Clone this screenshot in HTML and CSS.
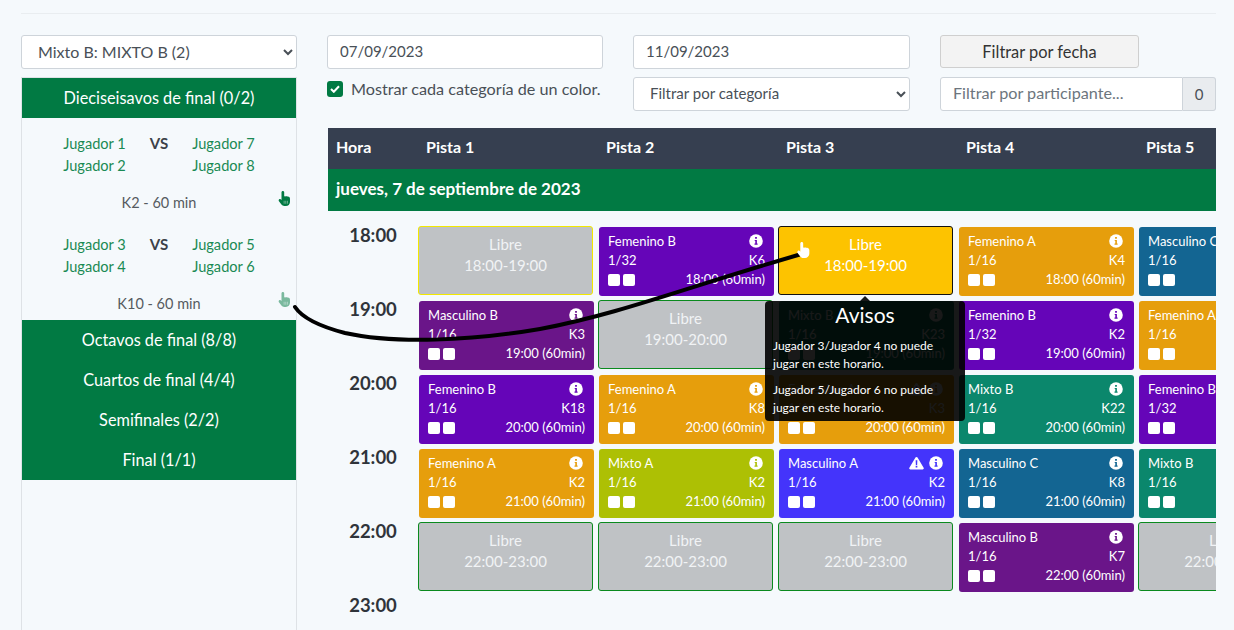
FILE: index.html
```html
<!DOCTYPE html>
<html lang="es">
  <head>
    <meta charset="UTF-8" />
    <title>Horarios</title>
    <link rel="stylesheet" href="styles.css">
  </head>
  <body>
    <svg width="0" height="0" class="defs">
      <symbol id="hand" viewBox="0 0 16 20">
        <path d="M4 1.800C4 .8 4.800 0 5.800 0s1.800.8 1.800 1.800v5.400c.7-.4 1.500-.4 2.100 0 .7-.4 1.600-.3 2.200.2.900-.3 1.900 0 2.500.6.6.6.9 1.400.9 2.300v4.200c0 3-2.400 5.500-5.400 5.500H7.700c-1.500 0-2.900-.7-3.800-1.900L.6 13.600c-.6-.8-.5-1.900.3-2.500.8-.6 1.900-.5 2.500.3l.6.8z" fill="currentColor"/>
        <path d="M7.500 13v4M9.700 13v4M11.900 13v4" stroke="#fff" stroke-opacity=".6" stroke-width=".9"/>
      </symbol>
      <symbol id="info" viewBox="0 0 14 14">
        <circle cx="7" cy="7" r="6.800" fill="#fff"/>
        <path d="M6.100 3h1.800v1.700H6.100zM5.700 5.900h2.200v3.700h.7v1.100H5.500V9.600h.8V7h-.6z" fill="currentColor"/>
      </symbol>
      <symbol id="warn" viewBox="0 0 16 14">
        <path d="M8 .5c.5 0 .9.3 1.100.7l6.500 10.800c.5.800-.1 1.800-1 1.800H1.400c-.9 0-1.500-1-1-1.800L6.900 1.200C7.100.8 7.500.5 8 .5z" fill="#fff"/>
        <path d="M7.100 4h1.800l-.2 5H7.300zM7.100 10h1.800v1.700H7.100z" fill="#4434fb"/>
      </symbol>
    </svg>

    <div class="page">
      <hr class="top-rule" />
      <div class="layout">
        <!-- Left: draw -->
        <aside class="sidebar">
          <select class="field select side-select">
            <option>Mixto B: MIXTO B (2)</option>
          </select>
          <div class="draw">
            <div class="round">Dieciseisavos de final (0/2)</div>
            <div class="match">
              <div class="players">
                <div>Jugador 1<br />Jugador 2</div>
                <strong>VS</strong>
                <div>Jugador 7<br />Jugador 8</div>
              </div>
              <div class="match-meta">K2 - 60 min</div>
              <svg class="drag"><use href="#hand" /></svg>
            </div>
            <div class="match">
              <div class="players">
                <div>Jugador 3<br />Jugador 4</div>
                <strong>VS</strong>
                <div>Jugador 5<br />Jugador 6</div>
              </div>
              <div class="match-meta">K10 - 60 min</div>
              <svg class="drag faded"><use href="#hand" /></svg>
            </div>
            <div class="round">Octavos de final (8/8)</div>
            <div class="round">Cuartos de final (4/4)</div>
            <div class="round">Semifinales (2/2)</div>
            <div class="round">Final (1/1)</div>
          </div>
        </aside>

        <!-- Right: calendar -->
        <main class="content">
          <div class="filters">
            <input class="field" type="text" value="07/09/2023" />
            <input class="field" type="text" value="11/09/2023" />
            <button class="filter-btn">Filtrar por fecha</button>
            <label class="color-check">
              <span class="check">
                <svg width="10" height="8" viewBox="0 0 10 8"><path d="M1 4l2.800 2.800L9 1.300" fill="none" stroke="#fff" stroke-width="2"/></svg>
              </span>
              Mostrar cada categoría de un color.
            </label>
            <select class="field select">
              <option>Filtrar por categoría</option>
            </select>
            <div class="search">
              <input class="field" type="text" placeholder="Filtrar por participante..." />
              <span class="count">0</span>
            </div>
          </div>

          <div class="schedule">
            <div class="courts">
              <div>Hora</div>
              <div>Pista 1</div>
              <div>Pista 2</div>
              <div>Pista 3</div>
              <div>Pista 4</div>
              <div>Pista 5</div>
            </div>
            <div class="day">jueves, 7 de septiembre de 2023</div>
            <div class="grid" id="grid"></div>
          </div>
        </main>
      </div>
    </div>

    <!-- Drag gesture over the page -->
    <svg class="stroke" width="1234" height="630">
      <path d="M295 307C303 319 322 327 345 333C395 344 470 341 540 329C620 314 690 286 805 253" />
    </svg>
    <svg class="cursor"><use href="#hand" /></svg>

    <div class="tip">
      <h3>Avisos</h3>
      <p>Jugador 3/Jugador 4 no puede jugar en este horario.</p>
      <p>Jugador 5/Jugador 6 no puede jugar en este horario.</p>
    </div>

    <script src="app.js"></script>
  </body>
</html>
```

FILE: styles.css
```css
/* Global Styles */
* {
  box-sizing: border-box;
}

body {
  margin: 0;
  height: 630px;
  overflow: hidden;
  position: relative;
  font-family: "Lato", "Open Sans", sans-serif;
  font-size: 15px;
  background-color: #f5f9fc;
  color: #212529;
}

.defs {
  position: absolute;
}

.page {
  height: 630px;
  padding: 13px 18px 0 21px;
  display: flex;
  flex-direction: column;
}

.top-rule {
  width: 100%;
  margin: 0 0 21px;
  border: none;
  border-top: 1px solid #e9edf0;
}

.layout {
  flex: 1;
  display: flex;
  gap: 30px;
  min-height: 0;
}

/* Form controls */
.field {
  width: 100%;
  height: 34px;
  padding: 0 12px 2px;
  border: 1px solid #ced4da;
  border-radius: 3px;
  background-color: #fff;
  color: #495057;
  font-family: inherit;
  font-size: 15px;
  outline: none;
}

.field::placeholder {
  color: #6c757d;
  font-size: 16.200px;
}

/* Left Side */
.sidebar {
  width: 276px;
  display: flex;
  flex-direction: column;
  min-height: 0;
}

.side-select {
  flex: none;
  font-size: 16px;
}

.draw {
  flex: 1;
  margin-top: 8px;
  border: 1px solid #dee2e6;
  border-bottom: none;
}

.round {
  height: 40px;
  line-height: 39px;
  text-align: center;
  background-color: #017a43;
  color: #fff;
  font-size: 16.300px;
}

.match {
  position: relative;
  height: 101px;
  padding-top: 15px;
}

.players {
  display: flex;
  justify-content: center;
  gap: 24px;
  font-size: 14.600px;
  line-height: 21.500px;
  color: #1a8a54;
}

.players strong {
  color: #3c4149;
  font-size: 15px;
}

.match-meta {
  margin-top: 18px;
  text-align: center;
  font-size: 14.500px;
  color: #555b60;
}

.drag {
  position: absolute;
  right: 5px;
  top: 73px;
  width: 13px;
  height: 15px;
  color: #017a43;
}

.drag.faded {
  opacity: 0.5;
}

/* Filters */
.content {
  width: 889px;
  min-width: 0;
}

.filters {
  display: grid;
  grid-template-columns: 276px 277px 276px;
  grid-template-rows: 34px 34px;
  column-gap: 30px;
  row-gap: 8px;
  margin-bottom: 17px;
}

.filter-btn {
  width: 199px;
  height: 33px;
  border: 1px solid #cfcfcf;
  border-radius: 3px;
  background-color: #f3f3f3;
  color: #333;
  font-family: inherit;
  font-size: 16.400px;
}

.color-check {
  display: flex;
  align-items: flex-start;
  gap: 8px;
  padding-top: 3px;
  color: #495057;
  font-size: 16.200px;
  line-height: 18px;
  white-space: nowrap;
}

.check {
  flex: none;
  width: 16px;
  height: 16px;
  margin-top: 1px;
  border-radius: 3px;
  background-color: #017a43;
  display: flex;
  align-items: center;
  justify-content: center;
}

.search {
  display: flex;
}

.search .field {
  flex: 1;
  min-width: 0;
  border-radius: 3px 0 0 3px;
}

.count {
  width: 33px;
  border: 1px solid #ced4da;
  border-left: none;
  border-radius: 0 3px 3px 0;
  background-color: #e9ecef;
  color: #495057;
  text-align: center;
  line-height: 32px;
}

/* Schedule */
.schedule {
  margin-left: 1px;
  overflow: hidden;
}

.courts {
  display: grid;
  grid-template-columns: 90px repeat(5, 180px);
  height: 41px;
  line-height: 38px;
  background-color: #363f50;
  color: #fff;
  font-weight: 700;
  font-size: 16px;
}

.courts > div {
  padding-left: 8px;
}

.day {
  height: 42px;
  line-height: 40px;
  padding-left: 8px;
  background-color: #017a43;
  color: #fff;
  font-weight: 700;
  font-size: 17px;
}

.grid {
  display: grid;
  grid-template-columns: 90px repeat(5, 180px);
  grid-auto-rows: 74px;
  padding-top: 15px;
}

.hour {
  text-align: center;
  font-size: 18.500px;
  font-weight: 700;
  line-height: 18px;
  color: #2f343a;
}

.slot {
  width: 175px;
  height: 69px;
  border-radius: 3px;
}

.free {
  padding-top: 7px;
  border: 1px solid #0a8a1e;
  background-color: #bfc2c5;
  color: #f1f3f5;
  text-align: center;
  font-size: 15px;
  line-height: 21px;
}

.free.moved {
  border-color: #f2e800;
}

.free.target {
  border-color: #111;
  background-color: #fdc300;
  color: #fff;
}

.game {
  margin: 1px 0 0 1px;
  padding: 5px 9px 0;
  color: #fff;
  font-size: 13px;
  line-height: 19px;
}

.game-row {
  display: flex;
  justify-content: space-between;
  align-items: center;
  white-space: nowrap;
}

.game-icons {
  display: flex;
  gap: 5px;
  margin: -2px 2px 0 0;
}

.game-icons svg {
  height: 14px;
  width: 14px;
}

.game-icons svg.warn-icon {
  width: 15px;
}

.boxes {
  display: flex;
  gap: 3px;
}

.boxes span {
  width: 12px;
  height: 12px;
  border-radius: 2px;
  background-color: #fff;
}

.fem-a { background-color: #e69e0c; }
.fem-b { background-color: #6505b8; }
.mas-a { background-color: #4434fb; }
.mas-b { background-color: #6a1589; }
.mas-c { background-color: #136592; }
.mix-a { background-color: #adc004; }
.mix-b { background-color: #0b876c; }

/* Overlays */
.stroke {
  position: absolute;
  left: 0;
  top: 0;
  pointer-events: none;
}

.stroke path {
  fill: none;
  stroke: #000;
  stroke-width: 4px;
  stroke-linecap: round;
}

.cursor {
  position: absolute;
  left: 797px;
  top: 242px;
  width: 13px;
  height: 16px;
  color: #fff;
}

.tip {
  position: absolute;
  left: 765px;
  top: 301px;
  width: 200px;
  height: 120px;
  padding: 3px 8px;
  border-radius: 4px;
  background-color: rgba(0, 0, 0, 0.9);
  color: #fff;
  font-size: 12px;
  line-height: 18px;
}

.tip::before {
  content: "";
  position: absolute;
  left: 95px;
  top: -5px;
  border: 5px solid transparent;
  border-top: none;
  border-bottom-color: rgba(0, 0, 0, 0.9);
}

.tip h3 {
  margin: 0 0 11px;
  text-align: center;
  font-size: 21px;
  font-weight: 400;
  line-height: 22px;
}

.tip p {
  margin: 0 0 8px;
}
```

FILE: app.js
```js
// Schedule data: one row per hour, one entry per court
const rows = [
  ["18:00", [
    { free: "moved" },
    { c: "fem-b", name: "Femenino B", round: "1/32", court: "K6" },
    { free: "target" },
    { c: "fem-a", name: "Femenino A", round: "1/16", court: "K4" },
    { c: "mas-c", name: "Masculino C", round: "1/16", court: "K1" },
  ]],
  ["19:00", [
    { c: "mas-b", name: "Masculino B", round: "1/16", court: "K3" },
    { free: "open" },
    { c: "mix-b", name: "Mixto B", round: "1/16", court: "K23" },
    { c: "fem-b", name: "Femenino B", round: "1/32", court: "K2" },
    { c: "fem-a", name: "Femenino A", round: "1/16", court: "K5" },
  ]],
  ["20:00", [
    { c: "fem-b", name: "Femenino B", round: "1/16", court: "K18" },
    { c: "fem-a", name: "Femenino A", round: "1/16", court: "K8" },
    { c: "fem-a", name: "Femenino A", round: "1/16", court: "K3", warn: true },
    { c: "mix-b", name: "Mixto B", round: "1/16", court: "K22" },
    { c: "fem-b", name: "Femenino B", round: "1/32", court: "K9" },
  ]],
  ["21:00", [
    { c: "fem-a", name: "Femenino A", round: "1/16", court: "K2" },
    { c: "mix-a", name: "Mixto A", round: "1/16", court: "K2" },
    { c: "mas-a", name: "Masculino A", round: "1/16", court: "K2", warn: true },
    { c: "mas-c", name: "Masculino C", round: "1/16", court: "K8" },
    { c: "mix-b", name: "Mixto B", round: "1/16", court: "K6" },
  ]],
  ["22:00", [
    { free: "open" },
    { free: "open" },
    { free: "open" },
    { c: "mas-b", name: "Masculino B", round: "1/16", court: "K7" },
    { free: "open" },
  ]],
];

const colors = {
  "fem-a": "#e69e0c",
  "fem-b": "#6505b8",
  "mas-a": "#4434fb",
  "mas-b": "#6a1589",
  "mas-c": "#136592",
  "mix-a": "#adc004",
  "mix-b": "#0b876c",
};

function nextHour(hour) {
  return parseInt(hour, 10) + 1 + ":00";
}

function slotHtml(slot, hour) {
  if (slot.free) {
    return `<div class="slot free ${slot.free}">Libre<br />${hour}-${nextHour(hour)}</div>`;
  }
  const warn = slot.warn ? '<svg class="warn-icon"><use href="#warn" /></svg>' : "";
  return `
    <div class="slot game ${slot.c}">
      <div class="game-row">
        <span>${slot.name}</span>
        <span class="game-icons" style="color: ${colors[slot.c]}">${warn}<svg><use href="#info" /></svg></span>
      </div>
      <div class="game-row"><span>${slot.round}</span><span>${slot.court}</span></div>
      <div class="game-row">
        <span class="boxes"><span></span><span></span></span>
        <span>${hour} (60min)</span>
      </div>
    </div>`;
}

const grid = document.getElementById("grid");
let html = "";
rows.forEach(([hour, slots]) => {
  html += `<div class="hour">${hour}</div>`;
  slots.forEach((slot) => {
    html += slotHtml(slot, hour);
  });
});
html += '<div class="hour">23:00</div>';
grid.innerHTML = html;
```
